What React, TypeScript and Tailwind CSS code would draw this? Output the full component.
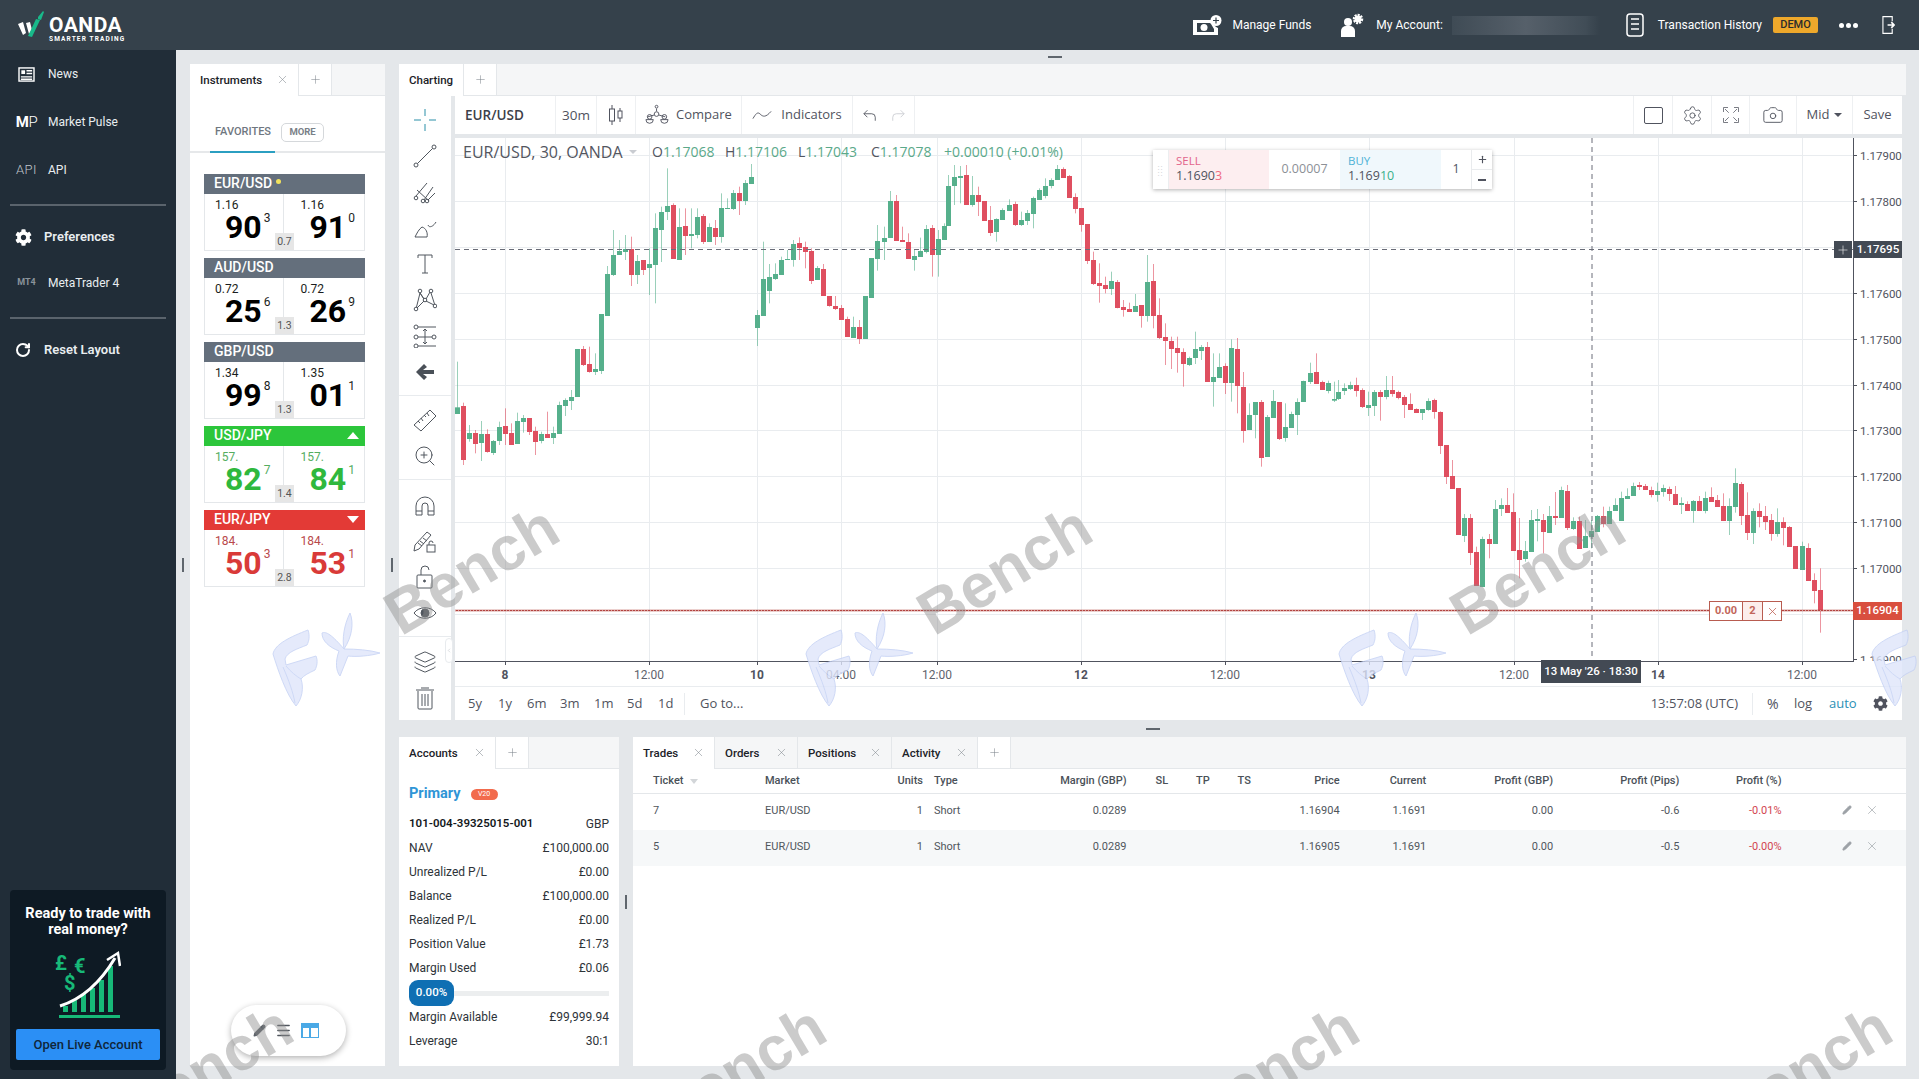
import { Plus, X, Settings, Camera, ChevronLeft, RotateCw, Pencil, Menu, ZoomIn, Layers } from "lucide-react";
import { FaCog } from "react-icons/fa";
import type { ReactNode } from "react";

// candle rows: [green?, bodyTop, bodyBottom, wickTop, wickBottom], y values are 3x from the base line
const segments: { x: number; base: number; rows: number[][] }[] = [
  { x: 457, base: 380, rows: [
    [1,82,102,-55,102],[0,78,240,68,255],[1,159,177,135,185],[0,159,192,150,220],[1,162,189,123,243],[0,162,216,148,218],[1,183,219,180,225],
    [1,141,183,125,195],[0,138,162,85,195],[0,159,195,130,195],[1,123,192,98,192],[1,114,126,105,158],[0,114,156,114,165],[0,153,186,140,225],
    [1,162,183,155,190],[0,162,174,95,174],[1,159,174,140,192],[1,75,162,65,162],[1,60,78,55,108],[1,51,63,30,90],[1,-93,51,-93,51],
  ] },
  { x: 582.5, base: 60, rows: [
    [0,867,915,858,918],[0,912,936,860,938],[1,927,936,880,945],[1,762,933,762,942],[1,642,768,618,768],[1,585,645,510,648],[1,573,585,540,585],
    [1,567,576,525,600],[0,567,645,530,678],[1,603,645,585,672],[0,600,630,600,645],[1,612,624,565,705],[1,504,615,460,730],[1,456,510,440,606],
    [1,438,456,325,480],[0,435,597,430,597],[1,501,600,445,600],[0,498,528,445,585],[1,522,528,445,565],[1,471,525,445,535],[0,468,546,462,552],
    [1,501,546,490,545],[0,504,531,480,555],[1,444,531,400,548],[1,444,447,415,447],[1,399,447,390,450],[0,399,423,380,465],[1,369,423,360,435],
    [1,351,372,312,372],[1,765,804,750,858],[1,657,768,545,768],[1,651,693,612,730],[1,642,657,610,660],[1,600,645,590,645],[1,597,600,570,600],
    [1,552,600,540,620],[0,549,564,532,600],[0,561,576,545,625],[0,573,663,565,672],[1,624,660,618,660],[0,627,708,612,708],[0,708,738,708,740],
    [0,738,747,708,750],[0,744,780,735,780],[0,777,831,770,831],[1,801,834,770,834],[0,801,837,780,852],[1,708,837,708,837],[1,594,714,594,714],
    [1,543,597,495,632],[1,534,546,500,600],[1,423,534,393,534],[0,423,543,405,543],[0,540,546,500,546],[0,546,597,520,597],[1,588,600,570,632],
    [1,573,591,533,591],[1,507,576,495,580],[0,504,585,495,650],[1,537,585,510,650],[1,498,540,490,540],
  ] },
  { x: 948.3, base: 140, rows: [
    [1,138,258,105,258],[1,111,138,75,195],[1,108,114,78,190],[0,105,195,75,195],[1,165,195,108,200],[0,165,186,140,228],[0,183,243,183,243],
    [0,240,279,198,288],[1,237,276,235,305],[1,210,240,205,240],[1,195,213,178,213],[0,192,255,185,258],[1,240,255,215,258],[1,219,243,210,255],
    [1,174,222,170,265],[1,150,180,145,180],[1,138,168,115,175],[1,120,138,115,145],[1,87,120,75,120],[0,87,114,82,114],[0,108,174,105,174],
    [0,171,207,160,220],[0,204,255,204,275],[0,252,363,252,372],[0,360,432,335,435],[0,429,438,370,488],[0,435,447,410,460],[1,423,447,395,465],
    [0,426,504,420,505],[0,501,510,480,530],[0,507,516,488,516],[1,498,516,462,516],[0,495,528,495,563],[1,426,528,345,545],[0,423,528,372,565],
    [0,525,594,475,597],[0,591,603,550,675],[0,603,627,590,687],[0,624,639,590,698],[0,636,672,625,740],[1,654,675,650,678],[1,627,654,575,672],
    [1,621,633,615,660],[0,621,726,606,726],[1,711,726,640,800],[1,681,714,640,714],[0,678,729,670,762],[1,624,729,598,785],[0,627,738,594,820],
    [0,741,873,696,908],[1,825,870,790,870],[1,786,825,786,895],[0,786,954,780,980],[1,831,951,825,951],[1,783,834,750,834],[0,786,897,786,900],
    [1,861,894,790,905],[1,822,864,815,864],[1,786,825,775,885],[1,723,786,722,786],[1,699,726,668,732],[0,696,732,640,732],[0,726,750,722,750],
    [1,729,753,722,760],[1,777,782,725,786],
  ] },
  { x: 1338, base: 340, rows: [
    [1,156,177,120,180],[1,144,153,130,165],[1,135,147,125,150],[0,135,153,113,170],[0,150,201,145,204],[1,195,204,155,228],[1,156,198,150,228],
    [0,156,171,150,242],[1,150,171,108,178],[0,150,162,108,170],[0,156,174,152,178],[0,171,195,165,234],[0,192,210,160,210],[0,207,219,205,219],
    [1,207,219,207,240],[1,183,210,175,212],[0,180,216,176,236],[0,216,318,214,342],[0,315,411,315,432],[0,408,447,360,447],[0,444,585,444,585],
    [1,534,588,522,606],[0,534,639,522,675],[0,636,738,620,738],[1,597,741,590,741],[0,597,612,582,655],[1,507,612,480,612],[1,495,507,475,528],
    [0,495,519,444,519],[0,516,633,460,633],[0,630,660,534,715],[1,633,657,603,665],[1,540,636,510,636],[1,537,543,507,604],[0,540,576,522,640],
    [1,528,579,498,579],[0,528,534,456,555],
  ] },
  { x: 1560.7, base: 440, rows: [
    [1,150,234,140,234],[0,153,264,135,270],[1,243,267,232,270],[0,243,327,230,327],[1,288,324,240,324],[1,273,291,240,325],[1,228,276,225,276],
    [0,228,252,200,262],[1,213,252,200,252],[1,195,213,175,213],[1,174,243,155,243],[1,168,177,145,177],[1,138,168,128,168],[0,135,141,126,150],
    [0,138,150,132,150],[0,150,165,140,172],[1,153,165,128,185],[1,144,156,134,170],[0,147,162,140,183],[0,162,195,138,195],[1,189,195,172,222],
    [0,192,213,184,213],[1,183,213,180,248],[0,183,213,168,213],[1,174,213,155,220],[0,171,186,142,186],[0,180,201,165,201],[0,198,243,160,243],
    [1,198,243,175,285],[1,129,201,85,218],[0,132,228,126,255],[0,225,279,157,300],[1,213,279,205,312],[0,213,231,190,262],[0,228,246,198,270],
    [0,240,282,222,302],[1,246,282,205,290],[0,246,264,232,316],[0,261,321,258,321],[0,318,387,318,387],[1,318,390,305,390],[0,324,423,310,423],
    [0,420,453,400,490],[0,450,513,385,578],
  ] },
];

const priceTicks: [string, number][] = [
  ["1.17900", 155], ["1.17800", 201], ["1.17600", 293], ["1.17500", 339], ["1.17400", 385],
  ["1.17300", 430], ["1.17200", 476], ["1.17100", 522], ["1.17000", 568], ["1.16900", 659],
];
const gridY = [155, 201, 247, 293, 339, 385, 430, 476, 522, 568, 614];
const timeTicks: [string, number, boolean][] = [
  ["8", 505, true], ["12:00", 649, false], ["10", 757, true], ["04:00", 841, false], ["12:00", 937, false], ["12", 1081, true],
  ["12:00", 1225, false], ["13", 1369, true], ["12:00", 1514, false], ["14", 1658, true], ["12:00", 1802, false],
];

function Chart() {
  return (
    <svg viewBox="455 138 1447 548" className="block w-[1447px] h-[548px]">
      {gridY.map((y) => <line key={y} x1="455" x2="1853" y1={y + 0.5} y2={y + 0.5} stroke="#e9ecef" />)}
      {timeTicks.map(([, x]) => <line key={x} x1={x + 0.5} x2={x + 0.5} y1="138" y2="661" stroke="#e9ecef" />)}
      {segments.map((seg) => seg.rows.map(([g, top, bot, wt, wb], i) => {
        const cx = Math.round(seg.x + i * 6.02);
        const color = g ? "#56b08c" : "#df4f60";
        return (
          <g key={seg.x + "-" + i}>
            <line x1={cx + 0.5} x2={cx + 0.5} y1={seg.base + wt / 3} y2={seg.base + wb / 3} stroke={color} strokeOpacity="0.6" />
            <rect x={cx - 2} width="5" y={seg.base + top / 3} height={Math.max((bot - top) / 3, 1)} fill={color} />
          </g>
        );
      }))}
      <line x1="455" x2="1853" y1="249.5" y2="249.5" stroke="#6a6d78" strokeDasharray="5 4" />
      <line x1="1592" x2="1592" y1="138" y2="661" stroke="#6a6d78" strokeDasharray="5 4" />
      <line x1="455" x2="1853" y1="610.5" y2="610.5" stroke="#b2433f" strokeWidth="1.5" />
      <line x1="455" x2="1853" y1="610.5" y2="610.5" stroke="#ffffff" strokeDasharray="1 2" strokeOpacity="0.5" />
      {priceTicks.map(([label, y]) => (
        <g key={label}>
          <line x1="1853" x2="1857" y1={y + 0.5} y2={y + 0.5} stroke="#50535e" />
          <text x="1860" y={y + 4.5} fontSize="11.5" fill="#50535e" fontFamily="Roboto, sans-serif">{label}</text>
        </g>
      ))}
      <rect x="455" y="661" width="1447" height="25" fill="#fff" />
      <line x1="1853.5" x2="1853.5" y1="138" y2="661" stroke="#50535e" />
      <line x1="455" x2="1854" y1="661.5" y2="661.5" stroke="#50535e" />
      {timeTicks.map(([label, x, bold]) => (
        <g key={x}>
          <line x1={x + 0.5} x2={x + 0.5} y1="661" y2="665" stroke="#50535e" />
          <text x={x} y="679" fontSize="12" textAnchor="middle" fill={bold ? "#50535e" : "#5f636d"} fontWeight={bold ? 700 : 400} fontFamily="Roboto, sans-serif">{label}</text>
        </g>
      ))}
    </svg>
  );
}

function Ico({ children, className = "w-6 h-6" }: { children: ReactNode; className?: string }) {
  return (
    <svg viewBox="0 0 24 24" fill="none" stroke="currentColor" strokeWidth="1" className={className}>
      {children}
    </svg>
  );
}

const drawTools: ReactNode[] = [
  <Ico className="w-6 h-6 text-[#2b8fa8]"><path d="M12 1v7M12 16v7M1 12h7M16 12h7" /></Ico>,
  <Ico><circle cx="3" cy="21" r="2" /><circle cx="21" cy="3" r="2" /><path d="M4.5 19.5l15-15" /></Ico>,
  <Ico><circle cx="3" cy="18" r="1.8" /><circle cx="10" cy="21" r="1.8" /><circle cx="14" cy="21" r="1.8" /><path d="M4 10l12 11M3 16L14 3M11 20L20 7M15 20l7-7" /></Ico>,
  <Ico><path d="M2 21h12c1-4-1-9-5-10-3 2-5 6-7 10zM15 9c1 3 5 2 8-3" /></Ico>,
  <Ico><path d="M5 6V3h14v3M12 3v18M9 21h6" /></Ico>,
  <Ico><circle cx="3" cy="21" r="1.8" /><circle cx="7" cy="3" r="1.8" /><circle cx="12" cy="12" r="1.8" /><circle cx="18" cy="3" r="1.8" /><circle cx="22" cy="18" r="1.8" /><path d="M3.5 19L7 5l4 6M13 13l8 4M18 5l3.500 11M7 5l4 6M17 4l-4 7M4 20l7-7" /></Ico>,
  <Ico><circle cx="3" cy="3" r="2" /><circle cx="3" cy="13" r="2" /><circle cx="3" cy="22" r="2" /><circle cx="21" cy="13" r="2" /><path d="M5 3h18M5 13h14M5 22h18M12 5v15M10 7l2-2 2 2M10 18l2 2 2-2" /></Ico>,
  <svg viewBox="0 0 24 24" className="w-6 h-6 text-[#4a5058]" fill="currentColor"><path d="M11 4l3 3-4 3h11v4H10l4 3-3 3-8-8z" /></svg>,
];
const measureTools: ReactNode[] = [
  <Ico><path d="M1 17L17 2l6 6L8 23zM5 13l2 2M8 10l2 3M11 7l2 2M14 5l2 3" /></Ico>,
  <ZoomIn className="w-6 h-6" strokeWidth={1} />,
];
const lockTools: ReactNode[] = [
  <Ico><path d="M3 22v-9a9 9 0 0118 0v9h-6v-9a3 3 0 00-6 0v9zM3 18h6M15 18h6" /></Ico>,
  <Ico><path d="M2 16L14 3l4 3L6 20l-5 2zM5 14l4 3M7 12l4 3M10 9l4 3" /><rect x="14" y="16" width="8" height="7" /><path d="M16 16v-2a2 2 0 014 0" /></Ico>,
  <Ico><rect x="4" y="10" width="15" height="13" rx="1" /><path d="M8 10V5a4 4 0 018 0" /><circle cx="11.500" cy="16" r="1" fill="currentColor" /></Ico>,
  <Ico><path d="M1 12c5-7 17-7 22 0-5 7-17 7-22 0z" /><circle cx="12" cy="12" r="4" fill="currentColor" /></Ico>,
];
const bottomTools: ReactNode[] = [
  <Layers className="w-6 h-6" strokeWidth={1} />,
  <Ico><path d="M5 5v17a1 1 0 001 1h12a1 1 0 001-1V5M3 4h18M8 2h8M9 8v12M12 8v12M15 8v12" /></Ico>,
];

function ToolGroup({ items, last, top = "pt-[6px]" }: { items: ReactNode[]; last?: boolean; top?: string }) {
  return (
    <div className={"flex flex-col pb-[5px] " + top + " " + (last ? "" : "border-b border-[#e8ebee]")}>
      {items.map((item, i) => (
        <div key={i} className="h-9 flex items-center justify-center text-[#50565e]">{item}</div>
      ))}
    </div>
  );
}

function TabStrip({ tabs, plus }: { tabs: { label: string; w: number; pad?: number }[]; plus?: boolean }) {
  return (
    <div className="h-[32px] flex bg-[#f5f6f7] border-b border-[#e4e7ea] shrink-0">
      {tabs.map((t, i) => (
        <div
          key={t.label}
          style={{ width: t.w }}
          className={"relative h-[32px] flex items-center pl-[10px] pt-[1px] border-r border-[#e4e7ea] text-[11.5px] font-medium text-[#1c2228] " + (i === 0 ? "bg-white" : "")}
        >
          {t.label}
          {t.pad !== undefined && <X className="absolute right-[9px] top-[9px] w-[13px] h-[13px] text-[#7d848b]" strokeWidth={1} />}
        </div>
      ))}
      {plus && (
        <div className="w-[33px] h-[31px] flex items-center justify-center border-r border-[#e4e7ea] bg-white">
          <Plus className="w-[13px] h-[13px] text-[#7d848b]" strokeWidth={1} />
        </div>
      )}
    </div>
  );
}

function Cell({ w, children, border = true }: { w: number; children: ReactNode; border?: boolean }) {
  return (
    <div style={{ width: w }} className={"h-full flex items-center justify-center shrink-0 text-[#50535e] " + (border ? "border-r border-[#eef0f2]" : "")}>
      {children}
    </div>
  );
}

function ChartToolbar() {
  return (
    <div className="h-[38px] bg-white flex font-['Open_Sans',sans-serif] text-[13px] shrink-0">
      <Cell w={101}><span className="font-semibold text-[13.5px] text-[#3c4048] w-full pl-[10px]">EUR/USD</span></Cell>
      <Cell w={41}><span className="text-[13.5px]">30m</span></Cell>
      <Cell w={39}>
        <svg viewBox="0 0 20 24" className="w-5 h-6" fill="none" stroke="currentColor"><path d="M6 2v20M14 5v14" /><rect x="3.500" y="6" width="5" height="12" fill="#fff" /><rect x="12" y="8" width="4" height="7" fill="#fff" /></svg>
      </Cell>
      <Cell w={106}>
        <svg viewBox="0 0 26 24" className="w-6 h-6 mr-[7px]" fill="none" stroke="currentColor"><circle cx="12.500" cy="11" r="2.500" /><circle cx="12.500" cy="3" r="1.500" /><path d="M12.500 5v3M3 14l7-2M22 14l-7-2" /><path d="M1 17h8a4 4 0 01-8 0zM17 17h8a4 4 0 01-8 0z" /><circle cx="5" cy="14" r="2.500" /><circle cx="21" cy="14" r="2.500" /></svg>
        Compare
      </Cell>
      <Cell w={111}>
        <svg viewBox="0 0 22 12" className="w-[20px] h-3 mr-[9px]" fill="none" stroke="currentColor"><path d="M1 10c3-5 5-8 8-5s6 4 12-3" /></svg>
        Indicators
      </Cell>
      <Cell w={62}>
        <svg viewBox="0 0 16 14" className="w-[14px] h-[13px] mr-[14px]" fill="none" stroke="currentColor"><path d="M5 1L1 5l4 4M1 5h9a4 4 0 014 4v4" /></svg>
        <svg viewBox="0 0 16 14" className="w-[14px] h-[13px] text-[#c9ccd1]" fill="none" stroke="currentColor"><path d="M11 1l4 4-4 4M15 5H6a4 4 0 00-4 4v4" /></svg>
      </Cell>
      <div className="flex-1 border-r border-[#eef0f2]" />
      <Cell w={39}><div className="w-[19px] h-[17px] border border-[#50535e] rounded-[2px]" /></Cell>
      <Cell w={39}><Settings className="w-[21px] h-[21px]" strokeWidth={1} /></Cell>
      <Cell w={38}>
        <Ico className="w-[18px] h-[18px]"><path d="M2 8V2h6M4 4l5 5M22 8V2h-6M20 4l-5 5M2 16v6h6M4 20l5-5M22 16v6h-6M20 20l-5-5" /></Ico>
      </Cell>
      <Cell w={47}><Camera className="w-[22px] h-[22px]" strokeWidth={1} /></Cell>
      <Cell w={56}>
        Mid
        <span className="ml-[5px] w-0 h-0 border-x-[4px] border-x-transparent border-t-[4px] border-t-[#50535e]" />
      </Cell>
      <Cell w={49} border={false}>Save</Cell>
    </div>
  );
}

function ChartOverlays() {
  return (
    <>
      <div className="absolute left-[8px] top-[4px] flex items-center font-['Open_Sans',sans-serif] text-[14px] leading-[20px] text-[#53565f] whitespace-nowrap">
        <span className="w-[162px] text-[16px] font-medium">EUR/USD, 30, OANDA</span>
        <span className="ml-[4px] mr-[15px] w-0 h-0 border-x-[4px] border-x-transparent border-t-[4px] border-t-[#c9ccd1]" />
        {[["O", "1.17068"], ["H", "1.17106"], ["L", "1.17043"], ["C", "1.17078"]].map(([k, v]) => (
          <span key={k} className="w-[73px]">
            {k}<span className="text-[#5ba98a]">{v}</span>
          </span>
        ))}
        <span className="text-[#5ba98a]">+0.00010 (+0.01%)</span>
      </div>

      <div className="absolute left-[698px] top-[12px] w-[339px] h-[39px] flex bg-white shadow-[0_1px_4px_rgba(0,0,0,0.3)] font-['Open_Sans',sans-serif] text-[#50535e]">
        <div className="w-[16px] flex items-center justify-center text-[#cfd2d6] text-[8px] leading-[6px] tracking-[1px] border-r border-[#eceef0]">::<br />::</div>
        <div className="w-[100px] bg-[#fdeef0] pl-[7px] pt-[3px] leading-[15px] text-[12.5px]">
          <div className="text-[#e2648b] text-[11.5px]">SELL</div>
          <div>1.1690<span className="text-[#ef6a82]">3</span></div>
        </div>
        <div className="w-[71px] flex items-center justify-center text-[12.5px] text-[#8c9096]">0.00007</div>
        <div className="w-[101px] bg-[#f0f8fc] pl-[8px] pt-[3px] leading-[15px] text-[12.5px]">
          <div className="text-[#4eb2d6] text-[11.5px]">BUY</div>
          <div>1.169<span className="text-[#39b08b]">10</span></div>
        </div>
        <div className="w-[31px] flex items-center justify-center text-[12.5px] border-r border-[#e9ebed]">1</div>
        <div className="flex-1 flex flex-col">
          <div className="flex-1 flex items-center justify-center border-b border-[#e9ebed]"><Plus className="w-[11px] h-[11px]" strokeWidth={2.5} /></div>
          <div className="flex-1 flex items-center justify-center"><div className="w-[8px] h-[2px] bg-[#50535e]" /></div>
        </div>
      </div>

      <div className="absolute left-[1379px] top-[103px] w-[18px] h-[17px] bg-[#434a54] flex items-center justify-center">
        <Plus className="w-[14px] h-[14px] text-white" strokeWidth={1} />
      </div>
      <div className="absolute left-[1399px] top-[103px] w-[48px] h-[17px] bg-[#434a54] text-white text-[11.5px] font-medium flex items-center justify-center">1.17695</div>
      <div className="absolute left-[1398px] top-[464px] w-[49px] h-[18px] bg-[#d94f3f] text-white text-[11.5px] font-medium flex items-center justify-center">1.16904</div>

      <div className="absolute left-[1254px] top-[463px] w-[73px] h-[20px] flex bg-white border border-[#b85c50] text-[#c2665a] text-[11px] font-bold">
        <div className="w-[33px] flex items-center justify-center border-r border-[#b85c50]">0.00</div>
        <div className="w-[20px] flex items-center justify-center border-r border-[#b85c50] bg-[#fceeec]">2</div>
        <div className="flex-1 flex items-center justify-center"><X className="w-[13px] h-[13px]" strokeWidth={1.5} /></div>
      </div>

      <div className="absolute left-[1086px] top-[522px] w-[100px] h-[23px] bg-[#434a54] text-white text-[11.5px] font-medium flex items-center justify-center">13 May &apos;26 · 18:30</div>
    </>
  );
}

function RangeBar() {
  return (
    <div className="h-[34px] bg-white border-t border-[#e9ecef] flex items-center font-['Open_Sans',sans-serif] text-[13px] text-[#50535e] shrink-0">
      <div className="flex items-center pl-[13px]">
        <span className="w-[30px]">5y</span>
        <span className="w-[29px]">1y</span>
        <span className="w-[33px]">6m</span>
        <span className="w-[34px]">3m</span>
        <span className="w-[33px]">1m</span>
        <span className="w-[31px]">5d</span>
        <span className="w-[26px]">1d</span>
      </div>
      <div className="h-[22px] border-l border-[#e9ecef] mr-[15px]" />
      <span>Go to...</span>
      <span className="ml-auto">13:57:08 (UTC)</span>
      <div className="h-[22px] border-l border-[#e9ecef] ml-[14px] mr-[14px]" />
      <span className="w-[27px] text-[14px]">%</span>
      <span className="w-[35px]">log</span>
      <span className="w-[44px] text-[#2b8fb5]">auto</span>
      <FaCog className="w-[15px] h-[15px] mr-[14px]" />
    </div>
  );
}

function ChartPane() {
  return (
    <div className="h-[656px] flex flex-col shrink-0">
      <TabStrip tabs={[{ label: "Charting", w: 65 }]} plus />
      <div className="flex-1 flex min-h-0">
        <div className="w-[52px] bg-white relative shrink-0">
          <ToolGroup items={drawTools} />
          <ToolGroup items={measureTools} />
          <ToolGroup items={lockTools} top="pt-[7px]" />
          <ToolGroup items={bottomTools} top="pt-[7px]" last />
          <div className="absolute right-[-2px] top-[542px] w-[8px] h-[25px] bg-white border border-[#e8ebee] rounded-[4px] flex items-center justify-center z-10">
            <ChevronLeft className="w-[9px] h-[9px] text-[#b9bdc2]" />
          </div>
        </div>
        <div className="ml-[4px] mr-[4px] flex-1 flex flex-col min-w-0">
          <ChartToolbar />
          <div className="h-[4px] shrink-0" />
          <div className="relative bg-white h-[548px]">
            <Chart />
            <ChartOverlays />
          </div>
          <RangeBar />
        </div>
      </div>
    </div>
  );
}

const accountRows: [string, string][] = [
  ["NAV", "£100,000.00"], ["Unrealized P/L", "£0.00"], ["Balance", "£100,000.00"],
  ["Realized P/L", "£0.00"], ["Position Value", "£1.73"], ["Margin Used", "£0.06"],
];

function AccountsPane() {
  return (
    <div className="w-[220px] bg-white flex flex-col shrink-0">
      <TabStrip tabs={[{ label: "Accounts", w: 97, pad: 1 }]} plus />
      <div className="px-[10px] text-[12px] text-[#2d3338]">
        <div className="h-[37px] pt-[1px] mt-[6px] flex items-center">
          <span className="text-[#2f95d6] text-[14.5px] font-bold">Primary</span>
          <span className="ml-[10px] w-[27px] h-[11px] rounded-full bg-[#f26b4d] text-white text-[7px] flex items-center justify-center">V20</span>
        </div>
        <div className="h-[24px] flex items-center justify-between">
          <span className="font-semibold text-[11.5px] text-[#14181c]">101-004-39325015-001</span>
          <span>GBP</span>
        </div>
        {accountRows.map(([k, v]) => (
          <div key={k} className="h-[24px] flex items-center justify-between"><span>{k}</span><span>{v}</span></div>
        ))}
        <div className="h-[26px] flex items-center">
          <div className="w-[45px] h-[26px] rounded-[9px] bg-[#0f6fb3] text-white text-[11.5px] font-medium flex items-center justify-center">0.00%</div>
          <div className="flex-1 h-[5px] bg-[#eceeef]" />
        </div>
        <div className="h-[24px] mt-[-1px] flex items-center justify-between"><span>Margin Available</span><span>£99,999.94</span></div>
        <div className="h-[24px] flex items-center justify-between"><span>Leverage</span><span>30:1</span></div>
      </div>
    </div>
  );
}

const tradeCols = "grid grid-cols-[132px_100px_58px_103px_100.5px_69.5px_41.6px_40px_62px_86.7px_126.9px_126.2px_102.2px_127px]";
const trades = [
  { ticket: "7", price: "1.16904", pips: "-0.6", pct: "-0.01%" },
  { ticket: "5", price: "1.16905", pips: "-0.5", pct: "-0.00%" },
];

function TradesPane() {
  return (
    <div className="flex-1 bg-white flex flex-col min-w-0">
      <TabStrip
        tabs={[
          { label: "Trades", w: 82, pad: 1 },
          { label: "Orders", w: 83, pad: 1 },
          { label: "Positions", w: 94, pad: 1 },
          { label: "Activity", w: 86, pad: 1 },
        ]}
        plus
      />
      <div className={tradeCols + " h-[25px] items-center pt-[1px] border-b border-[#e4e7ea] text-[11px] font-medium text-[#4a5158]"}>
        <div className="pl-[20px] flex items-center">Ticket<span className="ml-[7px] w-0 h-0 border-x-[4px] border-x-transparent border-t-[5px] border-t-[#d3d6d9]" /></div>
        <div>Market</div>
        <div className="text-right">Units</div>
        <div className="pl-[11px]">Type</div>
        <div className="text-right">Margin (GBP)</div>
        <div className="pl-[29px]">SL</div>
        <div>TP</div>
        <div>TS</div>
        <div className="text-right">Price</div>
        <div className="text-right">Current</div>
        <div className="text-right">Profit (GBP)</div>
        <div className="text-right">Profit (Pips)</div>
        <div className="text-right">Profit (%)</div>
        <div />
      </div>
      {trades.map((t, i) => (
        <div key={t.ticket} className={tradeCols + " h-[36px] items-center pb-[1px] text-[11px] text-[#50565c] " + (i === 1 ? "bg-[#f6f8f9]" : "")}>
          <div className="pl-[20px]">{t.ticket}</div>
          <div>EUR/USD</div>
          <div className="text-right">1</div>
          <div className="pl-[11px]">Short</div>
          <div className="text-right">0.0289</div>
          <div />
          <div />
          <div />
          <div className="text-right">{t.price}</div>
          <div className="text-right">1.1691</div>
          <div className="text-right">0.00</div>
          <div className="text-right">{t.pips}</div>
          <div className="text-right text-[#d2454f]">{t.pct}</div>
          <div className="flex items-center pl-[60px] pb-[4px]">
            <Pencil className="w-[10px] h-[10px] text-[#9ca1a6]" fill="#9ca1a6" />
            <X className="w-[14px] h-[14px] ml-[13px] text-[#8e9499]" strokeWidth={1} />
          </div>
        </div>
      ))}
    </div>
  );
}

type Quote = { pair: string; tone: "gray" | "up" | "down"; big: [string, string, string, string, string, string]; spread: string };
const quotes: Quote[] = [
  { pair: "EUR/USD", tone: "gray", big: ["1.16", "90", "3", "1.16", "91", "0"], spread: "0.7" },
  { pair: "AUD/USD", tone: "gray", big: ["0.72", "25", "6", "0.72", "26", "9"], spread: "1.3" },
  { pair: "GBP/USD", tone: "gray", big: ["1.34", "99", "8", "1.35", "01", "1"], spread: "1.3" },
  { pair: "USD/JPY", tone: "up", big: ["157.", "82", "7", "157.", "84", "1"], spread: "1.4" },
  { pair: "EUR/JPY", tone: "down", big: ["184.", "50", "3", "184.", "53", "1"], spread: "2.8" },
];

function Price({ small, big, sup, tone, right }: { small: string; big: string; sup: string; tone: Quote["tone"]; right?: boolean }) {
  const color = tone === "up" ? "text-[#2fb83d]" : tone === "down" ? "text-[#d93a38]" : "text-black";
  const smallColor = tone === "up" ? "text-[#55ad5f]" : tone === "down" ? "text-[#b9494b]" : "text-[#1a1d20]";
  return (
    <div className={"w-[80px] pt-[4px] " + (right ? "pl-[16px]" : "pl-[10px] border-r border-[#e4e7ea]")}>
      <div className={"text-[12px] leading-[14px] " + smallColor}>{small}</div>
      <div className={"flex items-start mt-[-3px] " + (right ? "pl-[9px]" : "pl-[10px]")}>
        <span className={"text-[32px] leading-[36px] font-bold " + color}>{big}</span>
        <span className={"text-[12px] leading-[14px] ml-[2px] mt-[2px] " + (tone === "gray" ? "text-[#1a1d20]" : smallColor)}>{sup}</span>
      </div>
    </div>
  );
}

function QuoteCard({ q }: { q: Quote }) {
  const head = q.tone === "up" ? "bg-[#2cc63b]" : q.tone === "down" ? "bg-[#e33a36]" : "bg-[#646f7c]";
  return (
    <div className="w-[161px] mb-[7px]">
      <div className={"h-[20px] pl-[10px] pr-[6px] pb-[1px] flex items-center text-white text-[14px] font-medium " + head}>
        {q.pair}
        {q.pair === "EUR/USD" && <span className="ml-[4px] mb-[4px] w-[5px] h-[5px] rounded-full bg-[#f2e25c]" />}
        {q.tone === "up" && <span className="ml-auto w-0 h-0 border-x-[6px] border-x-transparent border-b-[7px] border-b-white" />}
        {q.tone === "down" && <span className="ml-auto w-0 h-0 border-x-[6px] border-x-transparent border-t-[7px] border-t-white" />}
      </div>
      <div className="relative h-[57px] flex border border-t-0 border-[#e4e7ea]">
        <Price small={q.big[0]} big={q.big[1]} sup={q.big[2]} tone={q.tone} />
        <Price small={q.big[3]} big={q.big[4]} sup={q.big[5]} tone={q.tone} right />
        <div className="absolute left-[70px] bottom-0 w-[19px] h-[17px] bg-[#e6e6e6] text-[#555] text-[10.5px] flex items-center justify-center">{q.spread}</div>
      </div>
    </div>
  );
}

function InstrumentsPane() {
  return (
    <div className="relative w-[195px] h-full bg-white flex flex-col shrink-0">
      <TabStrip tabs={[{ label: "Instruments", w: 109, pad: 1 }]} plus />
      <div className="h-[57px] relative border-b-2 border-[#e6e8ea] flex items-center pl-[25px] pt-[18px]">
        <span className="text-[11px] font-medium text-[#6f7780]">FAVORITES</span>
        <span className="ml-[10px] w-[43px] h-[19px] rounded-[5px] border border-[#d5d8db] text-[9.5px] font-bold text-[#7a8188] flex items-center justify-center">MORE</span>
        <div className="absolute left-[20px] bottom-[-2px] w-[65px] h-[2px] bg-[#2b9fc1]" />
      </div>
      <div className="pl-[14px] pt-[21px]">
        {quotes.map((q) => <QuoteCard key={q.pair} q={q} />)}
      </div>
      <div className="absolute left-[41px] top-[941px] w-[115px] h-[51px] rounded-full bg-white shadow-[0_2px_6px_rgba(0,0,0,0.3)] flex items-center pl-[22px]">
        <Pencil className="w-[13px] h-[13px] text-[#5a6067] mr-[9px]" fill="#5a6067" />
        <Menu className="w-[17px] h-[17px] text-[#50565e] mr-[9px]" />
        <div className="w-[18px] h-[15px] bg-[#4aa9e6] flex flex-col p-[1.5px]">
          <div className="h-[3px]" />
          <div className="flex-1 flex gap-[1.5px]"><div className="flex-1 bg-white" /><div className="flex-1 bg-white" /></div>
        </div>
      </div>
    </div>
  );
}

function SideItem({ icon, label, medium, x }: { icon: ReactNode; label: string; medium?: boolean; x: number }) {
  return (
    <div className="h-[48px] flex items-center">
      <div style={{ width: x, paddingLeft: medium ? 2 : 5 }} className="shrink-0 flex items-center justify-center text-white">{icon}</div>
      <span className={"text-[#e9edf0] " + (medium ? "text-[13px] font-semibold" : "text-[12px]")}>{label}</span>
    </div>
  );
}

function Sidebar() {
  return (
    <aside className="relative z-20 w-[176px] bg-[#212d38] shrink-0 flex flex-col">
      <SideItem x={48} label="News" icon={
        <svg viewBox="0 0 18 16" className="w-[17px] h-[15px]" fill="none" stroke="currentColor" strokeWidth="1.500"><rect x="1" y="1" width="16" height="14" /><rect x="3.500" y="3.500" width="4" height="4" fill="currentColor" stroke="none" /><path d="M9 4h6M9 7h6M3 10.500h12M3 13h12" /></svg>
      } />
      <SideItem x={48} label="Market Pulse" icon={<span className="text-[15px] font-bold tracking-[-0.5px]">M<span className="font-light">P</span></span>} />
      <SideItem x={48} label="API" icon={<span className="text-[13px] font-light text-[#c0c6cc] tracking-[0.5px]">API</span>} />
      <div className="mx-[10px] mt-[10px] border-t-2 border-[#5a636c]" />
      <div className="mt-[7px]">
        <SideItem x={44} medium label="Preferences" icon={<FaCog className="w-[17px] h-[17px]" />} />
      </div>
      <div className="mt-[-2px]">
        <SideItem x={48} label="MetaTrader 4" icon={<span className="text-[9px] font-bold text-[#8a939b]">MT4</span>} />
      </div>
      <div className="mx-[10px] mt-[10px] border-t-2 border-[#5a636c]" />
      <div className="mt-[7px]">
        <SideItem x={44} medium label="Reset Layout" icon={<RotateCw className="w-[16px] h-[16px]" strokeWidth={3} />} />
      </div>

      <div className="absolute left-[10px] top-[840px] w-[156px] h-[180px] rounded-[4px] bg-[#0e1a24] flex flex-col items-center pt-[16px]">
        <div className="text-white text-[14.5px] leading-[16px] font-bold text-center">Ready to trade with<br />real money?</div>
        <svg viewBox="0 0 66 68" className="w-[66px] h-[68px] mt-[12px]">
          <text x="0" y="20" fontSize="20" fontWeight="700" fill="#17b978" fontFamily="Roboto, sans-serif">£</text>
          <text x="19" y="23" fontSize="20" fontWeight="700" fill="#17b978" fontFamily="Roboto, sans-serif">€</text>
          <text x="9" y="40" fontSize="20" fontWeight="700" fill="#17b978" fontFamily="Roboto, sans-serif">$</text>
          <path d="M8 62h5v-6H8zM17 62h5V50h-5zM26 62h5V44h-5zM35 62h5V38h-5zM44 62h5V30h-5zM53 62h5V16h-5zM4 65h61v3H4z" fill="#17b978" />
          <path d="M5 56C30 48 47 30 60 8" stroke="#fff" strokeWidth="3" fill="none" />
          <path d="M52 10l11-7 2 13" stroke="#fff" strokeWidth="2.500" fill="none" />
        </svg>
        <div className="absolute left-[6px] bottom-[10px] w-[144px] h-[31px] rounded-[2px] bg-[#2b8ff5] text-[#10263a] text-[13px] font-medium flex items-center justify-center">Open Live Account</div>
      </div>
    </aside>
  );
}

function TopBar() {
  return (
    <header className="h-[50px] bg-[#35414b] flex items-center shrink-0 text-white text-[12px]">
      <svg viewBox="0 0 28 28" className="ml-[17px] w-[28px] h-[28px]">
        <path d="M1 13l5-2 3 11-3 2zM9 12l4-1 2 8-3 4z" fill="#fff" />
        <path d="M11 25l8-17 4 1-8 17zM21 6l5-6 1 1-3 8-3-1z" fill="#19b98a" />
      </svg>
      <div className="ml-[4px] flex flex-col pt-[9px]">
        <span className="text-[21px] leading-[19px] font-bold tracking-[0.5px]">OANDA</span>
        <span className="text-[6.5px] leading-[9px] font-bold tracking-[1.15px]">SMARTER TRADING</span>
      </div>
      <div className="ml-auto flex items-center pr-[24px]">
        <svg viewBox="0 0 29 20" className="w-[29px] h-[20px]" fill="#fff">
          <path d="M0 5h20v2a8 8 0 005 6v7H0zM4 8v9h17v-3l-3-5-1-1z" fillRule="evenodd" />
          <circle cx="11" cy="12.500" r="3.500" />
          <circle cx="23" cy="5.500" r="5.500" />
          <path d="M23 2.500v6M20 5.500h6" stroke="#35414b" strokeWidth="1.200" />
        </svg>
        <span className="ml-[10px] mr-[1px]">Manage Funds</span>
        <svg viewBox="0 0 24 24" className="ml-[28px] w-[24px] h-[24px]" fill="#fff">
          <circle cx="8" cy="9" r="4" />
          <path d="M1 24v-6a5 5 0 015-5h4a5 5 0 015 5v6z" />
          <circle cx="18" cy="6" r="4" fill="none" stroke="#fff" strokeWidth="2.500" strokeDasharray="2 1" />
          <circle cx="18" cy="6" r="3.500" />
        </svg>
        <span className="ml-[12px]">My Account:</span>
        <div className="ml-[9px] w-[148px] h-[19px] bg-[linear-gradient(90deg,#3f4b55,#56606a_50%,#414d57_90%,#35414b)]" />
        <svg viewBox="0 0 18 24" className="ml-[26px] w-[18px] h-[24px]" fill="none" stroke="#fff" strokeWidth="1.500">
          <rect x="1" y="1" width="16" height="22" rx="3" />
          <path d="M5 6h8M5 11h8M5 16h8" />
        </svg>
        <span className="ml-[14px]">Transaction History</span>
        <span className="ml-[11px] w-[45px] h-[16px] rounded-[2px] bg-[#eea82b] text-[#2c2c2c] text-[11px] font-medium flex items-center justify-center">DEMO</span>
        <div className="ml-[21px] flex gap-[2px]">
          <span className="w-[5px] h-[5px] rounded-full bg-white" />
          <span className="w-[5px] h-[5px] rounded-full bg-white" />
          <span className="w-[5px] h-[5px] rounded-full bg-white" />
        </div>
        <svg viewBox="0 0 14 20" className="ml-[24px] w-[13px] h-[20px]" fill="none" stroke="#fff" strokeWidth="1.200">
          <path d="M11 6V1H1v18h10v-5" />
          <path d="M6 10h7M10 7l3 3-3 3" strokeWidth="1.800" />
        </svg>
      </div>
    </header>
  );
}

function FxLogo({ left }: { left: number }) {
  return (
    <svg viewBox="0 0 108 95" style={{ left }} className="absolute top-[562px] w-[108px] h-[95px] opacity-80" fill="#dfe6fb" stroke="#c3d0f5">
      <path d="M1 42C3 32 18 25 36 18c2 6 1 11-1 15-10 4-20 7-22 14l1 6 30-9c2 5 1 10-1 14-6 3-11 5-14 9 3 9 1 20-5 27C14 82 6 58 1 42z" />
      <path d="M11 55c6 14 10 25 12 36M29 67c-5-3-10-7-15-13" fill="none" />
      <path d="M50 21c4-2 10 2 22 16 12 0 26 1 36 4-10 3-24 4-32 3l-8 20c-4-5-5-14-1-25-10-4-17-10-17-18z" />
      <path d="M78 1c4 10 2 24-6 36-2-10 0-24 6-36z" />
    </svg>
  );
}

function BenchMark({ cx, cy }: { cx: number; cy: number }) {
  return (
    <span
      style={{ left: cx - 120, top: cy - 40 }}
      className="absolute w-[240px] h-[80px] flex items-center justify-center rotate-[-31deg] font-['Liberation_Sans',sans-serif] text-[62px] font-bold text-[#8c8c8c]/45"
    >
      Bench
    </span>
  );
}

function Watermarks() {
  return (
    <div className="absolute left-[176px] top-[50px] right-0 bottom-0 overflow-hidden z-10 pointer-events-none">
      {[471, 1004, 1537].map((cx) => <BenchMark key={cx} cx={cx - 176} cy={519} />)}
      {[205, 738, 1271, 1804].map((cx) => <BenchMark key={cx} cx={cx - 176} cy={1019} />)}
      {[272, 805, 1338, 1871].map((x) => <FxLogo key={x} left={x - 176} />)}
    </div>
  );
}

function Splitter() {
  return (
    <div className="w-[14px] flex items-center justify-center shrink-0">
      <div className="w-[2px] h-[14px] bg-[#5f666d]" />
    </div>
  );
}

export default function App() {
  return (
    <div className="relative w-[1919px] h-[1079px] overflow-hidden flex flex-col bg-[#e4e7ea] font-['Roboto',sans-serif]">
      <TopBar />
      <div className="flex-1 flex min-h-0">
        <Sidebar />
        <main className="flex-1 flex flex-col min-w-0">
          <div className="h-[14px] flex justify-center pl-[14px] shrink-0">
            <div className="w-[14px] h-[2px] bg-[#5f666d] mt-[6px]" />
          </div>
          <div className="flex-1 flex pb-[13px] min-h-0">
            <Splitter />
            <InstrumentsPane />
            <Splitter />
            <div className="w-[1507px] flex flex-col shrink-0">
              <ChartPane />
              <div className="h-[17px] flex justify-center shrink-0">
                <div className="w-[14px] h-[2px] bg-[#5f666d] mt-[8px]" />
              </div>
              <div className="flex-1 flex min-h-0">
                <AccountsPane />
                <Splitter />
                <TradesPane />
              </div>
            </div>
          </div>
        </main>
      </div>
      <Watermarks />
    </div>
  );
}
